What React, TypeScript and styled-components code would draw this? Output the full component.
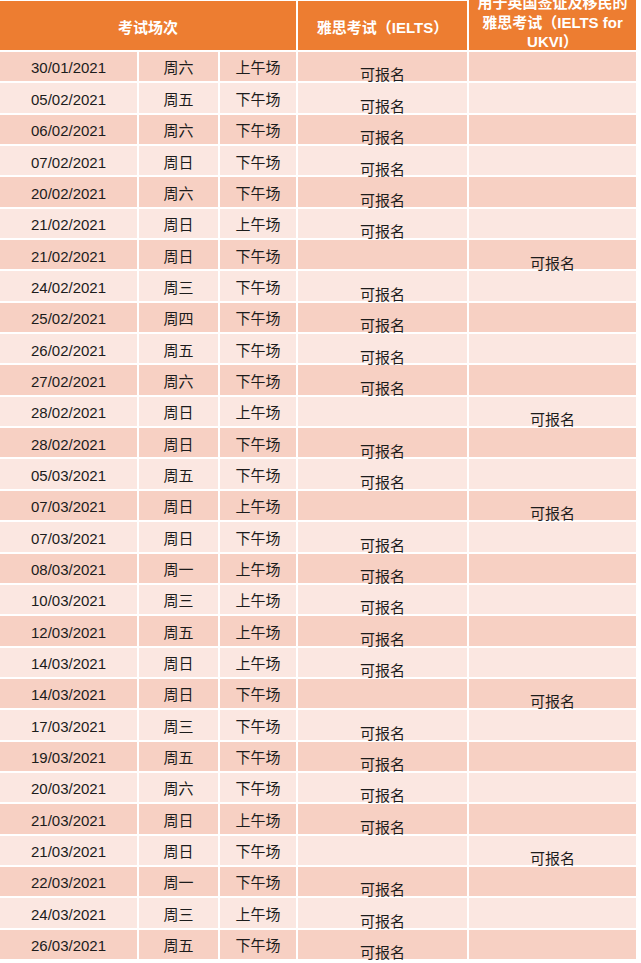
import React from 'react';
import styled, { createGlobalStyle } from 'styled-components';

const GlobalStyle = createGlobalStyle`
  body {
    margin: 0;
    background: #ffffff;
    font-family: "Liberation Sans", "Noto Sans CJK SC", sans-serif;
  }
`

const COLS = '139px 81px 78px 171px 167px';

const Table = styled.div`
  width: 636px;
`
const HeaderRow = styled.div`
  display: grid;
  grid-template-columns: 298px 171px 167px;
  grid-template-rows: 52px;
  height: 52px;
`
const HeaderCell = styled.div<{ $top?: boolean }>`
  min-height: 0;
  background-color: #ed7d31;
  color: #ffffff;
  font-weight: bold;
  font-size: 15px;
  line-height: 19.5px;
  text-align: center;
  display: flex;
  flex-direction: column;
  justify-content: ${p => (p.$top ? 'flex-end' : 'center')};
  padding-top: ${p => (p.$top ? '0' : '4px')};
  overflow: ${p => (p.$top ? 'visible' : 'hidden')};
  border-right: 2px solid #ffffff;
  border-bottom: 2px solid #ffffff;
  border-top: ${p => (p.$top ? '0' : '1px solid #ffffff')};
  box-sizing: border-box;
  &:last-child {
    border-right: none;
  }
`
const HeaderLines = styled.div`
  margin-bottom: -1.5px;
`
const Row = styled.div<{ $dark: boolean }>`
  display: grid;
  grid-template-columns: ${COLS};
  grid-template-rows: 31.35px;
  height: 31.35px;
  background-color: ${p => (p.$dark ? '#f7d0c3' : '#fbe7e1')};
  color: #1c1c1c;
  font-size: 15px;
`
const Cell = styled.div<{ $low?: boolean }>`
  min-height: 0;
  display: flex;
  justify-content: center;
  align-items: center;
  padding-top: ${p => (p.$low ? '16.6px' : '2.6px')};
  line-height: 17px;
  white-space: nowrap;
  border-right: 2px solid #ffffff;
  border-bottom: 2px solid #ffffff;
  box-sizing: border-box;
  &:last-child {
    border-right: none;
  }
`

type Exam = { date: string; day: string; slot: string; ukvi?: boolean };

const exams: Exam[] = [
  { date: '30/01/2021', day: '周六', slot: '上午场' },
  { date: '05/02/2021', day: '周五', slot: '下午场' },
  { date: '06/02/2021', day: '周六', slot: '下午场' },
  { date: '07/02/2021', day: '周日', slot: '下午场' },
  { date: '20/02/2021', day: '周六', slot: '下午场' },
  { date: '21/02/2021', day: '周日', slot: '上午场' },
  { date: '21/02/2021', day: '周日', slot: '下午场', ukvi: true },
  { date: '24/02/2021', day: '周三', slot: '下午场' },
  { date: '25/02/2021', day: '周四', slot: '下午场' },
  { date: '26/02/2021', day: '周五', slot: '下午场' },
  { date: '27/02/2021', day: '周六', slot: '下午场' },
  { date: '28/02/2021', day: '周日', slot: '上午场', ukvi: true },
  { date: '28/02/2021', day: '周日', slot: '下午场' },
  { date: '05/03/2021', day: '周五', slot: '下午场' },
  { date: '07/03/2021', day: '周日', slot: '上午场', ukvi: true },
  { date: '07/03/2021', day: '周日', slot: '下午场' },
  { date: '08/03/2021', day: '周一', slot: '上午场' },
  { date: '10/03/2021', day: '周三', slot: '上午场' },
  { date: '12/03/2021', day: '周五', slot: '上午场' },
  { date: '14/03/2021', day: '周日', slot: '上午场' },
  { date: '14/03/2021', day: '周日', slot: '下午场', ukvi: true },
  { date: '17/03/2021', day: '周三', slot: '下午场' },
  { date: '19/03/2021', day: '周五', slot: '下午场' },
  { date: '20/03/2021', day: '周六', slot: '下午场' },
  { date: '21/03/2021', day: '周日', slot: '上午场' },
  { date: '21/03/2021', day: '周日', slot: '下午场', ukvi: true },
  { date: '22/03/2021', day: '周一', slot: '下午场' },
  { date: '24/03/2021', day: '周三', slot: '上午场' },
  { date: '26/03/2021', day: '周五', slot: '下午场' },
];

function App() {
  return (
    <>
      <GlobalStyle />
      <Table>
        <HeaderRow>
          <HeaderCell>考试场次</HeaderCell>
          <HeaderCell>雅思考试（IELTS）</HeaderCell>
          <HeaderCell $top>
            <HeaderLines>
              <div>用于英国签证及移民的</div>
              <div>雅思考试（IELTS for</div>
              <div>UKVI）</div>
            </HeaderLines>
          </HeaderCell>
        </HeaderRow>
        {exams.map((x, i) => (
          <Row key={i} $dark={i % 2 === 0}>
            <Cell>{x.date}</Cell>
            <Cell>{x.day}</Cell>
            <Cell>{x.slot}</Cell>
            <Cell $low>{x.ukvi ? '' : '可报名'}</Cell>
            <Cell $low>{x.ukvi ? '可报名' : ''}</Cell>
          </Row>
        ))}
      </Table>
    </>
  );
}

export default App;
